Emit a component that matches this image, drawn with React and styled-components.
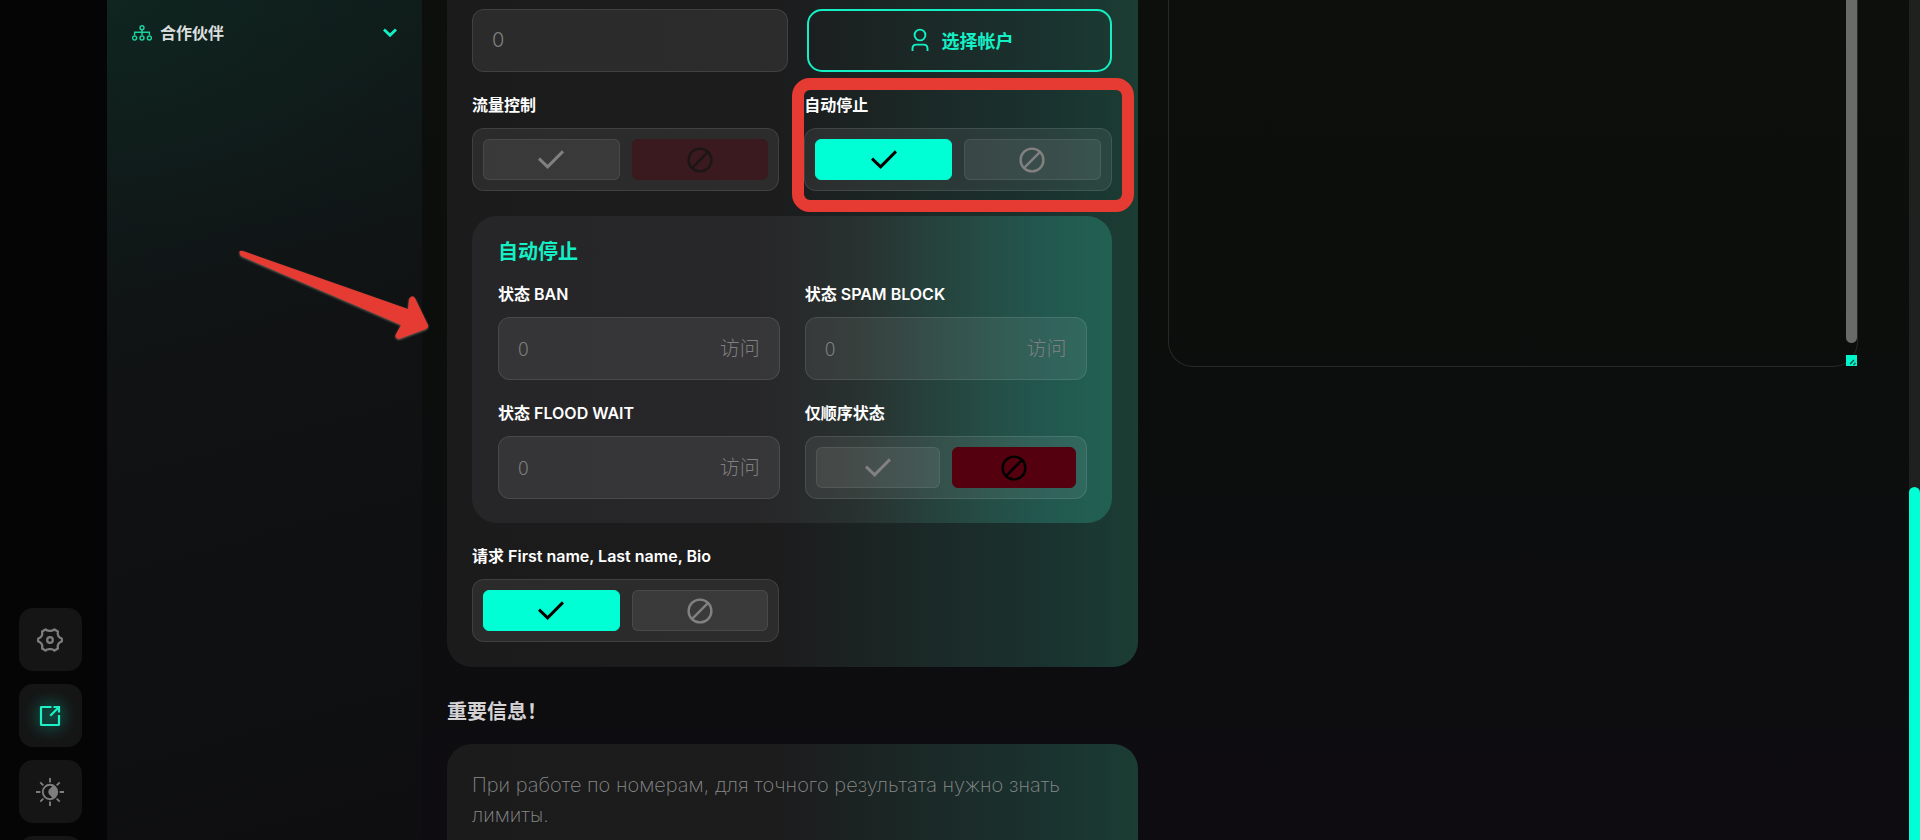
import { useState } from "react";
import styled, { createGlobalStyle, css } from "styled-components";

const GlobalStyle = createGlobalStyle`
    * {
        box-sizing: border-box;
    }

    body {
        margin: 0;
        background-color: #0d0e0e;
        color: #ffffff;
        font-family: Inter, "Noto Sans CJK SC", sans-serif;
    }

    button, input, textarea {
        font-family: inherit;
        margin: 0;
    }
`;

const Page = styled.div`
    position: relative;
    display: flex;
    height: 100vh;
    overflow: hidden;
    background: linear-gradient(180deg, #0d0f0c 0%, #0c0e0d 50%, #0d0d0f 70%, #0e0c10 100%);
`;

const Rail = styled.nav`
    display: flex;
    flex-direction: column;
    justify-content: flex-end;
    flex: 0 0 107px;
    padding-left: 19px;
    background-color: #050505;
    overflow: hidden;
`;

const RailList = styled.div`
    display: flex;
    flex-direction: column;
    gap: 13px;
    margin-bottom: -59px;
`;

const RailButton = styled.button`
    display: flex;
    justify-content: center;
    align-items: center;
    width: 63px;
    height: 63px;
    padding: 0 2px 0 0;
    border: none;
    border-radius: 14px;
    background-color: #151515;
    color: ${({ $active }) => ($active ? "#1df2c6" : "#7d7d7d")};
    cursor: pointer;

    svg {
        overflow: visible;
        filter: ${({ $active }) => ($active ? "drop-shadow(0 0 8px #00ffd4)" : "none")};
    }
`;

const Sidebar = styled.aside`
    flex: 0 0 315px;
    padding: 20px 25px;
    background:
        radial-gradient(ellipse 420px 280px at 0 0, rgba(16, 52, 40, 0.35), transparent),
        linear-gradient(165deg, #0f1d1b 0%, #101616 26%, #101213 44%, #0e0e10 100%);
`;

const MenuItem = styled.button`
    display: flex;
    align-items: center;
    width: 100%;
    height: 26px;
    padding: 0;
    border: none;
    background: none;
    color: #dadedd;
    font-size: 16px;
    line-height: 24px;
    font-weight: 600;
    cursor: pointer;

    span {
        flex: 1;
        margin-left: 8px;
        text-align: left;
    }
`;

const Main = styled.main`
    display: grid;
    grid-template-columns: 1fr 1fr;
    align-items: start;
    gap: 30px;
    flex: 1;
    min-width: 0;
    padding: 0 51px 0 25px;
`;

const Column = styled.div`
    min-width: 0;
`;

const cardGradient = css`
    background: linear-gradient(90deg, #1b1b1c 0%, #1c1c1d 48%, #1b2725 66%, #1a3330 88%, #1b3d33 100%);
`;

const FormCard = styled.section`
    ${cardGradient}
    padding: 9px 26px 25px 25px;
    border-radius: 0 0 25px 25px;
`;

const AccountRow = styled.div`
    display: flex;
    gap: 19px;
`;

const FieldGrid = styled.div`
    display: grid;
    grid-template-columns: 1fr 1fr;
    gap: 20px 25px;
`;

const MainFields = styled(FieldGrid)`
    margin-top: 20px;
`;

const Field = styled.div`
    display: flex;
    flex-direction: column;
    gap: 10px;
    min-width: 0;
`;

const fieldLabel = css`
    font-size: 16px;
    line-height: 26px;
    font-weight: 600;
`;

const Label = styled.label`
    ${fieldLabel}
`;

const GroupLabel = styled.span`
    ${fieldLabel}
`;

const fieldBox = css`
    height: 63px;
    border: 1px solid rgba(255, 255, 255, 0.1);
    border-radius: 12px;
    background-color: rgba(255, 255, 255, 0.07);
`;

const InputBox = styled.div`
    ${fieldBox}
    display: flex;
    align-items: center;
    flex: ${({ $grow }) => ($grow ? "1 1 0" : "none")};
    min-width: 0;
    padding: 0 19px 2px;
    color: #7f7f7f;
    font-size: 20px;
    font-weight: 300;
`;

const NumberInput = styled.input`
    flex: 1;
    min-width: 0;
    padding: 0;
    border: none;
    outline: none;
    background: none;
    color: inherit;
    font-size: inherit;
    font-weight: inherit;
    font-family: ${({ $cjk }) => ($cjk ? '"Noto Sans CJK SC", sans-serif' : "inherit")};

    &::placeholder {
        color: #7f7f7f;
        opacity: 1;
    }
`;

const SelectButton = styled.button`
    display: flex;
    justify-content: center;
    align-items: center;
    gap: 13px;
    flex: 0 0 305px;
    height: 63px;
    padding: 0 0 2px 6px;
    border: 2px solid #14f0c5;
    border-radius: 15px;
    background: none;
    color: #14f0c5;
    font-size: 18px;
    font-weight: 700;
    cursor: pointer;
`;

const ToggleBox = styled.div`
    ${fieldBox}
    display: flex;
    gap: 12px;
    padding: 10px;
`;

const ToggleButton = styled.button`
    display: flex;
    justify-content: center;
    align-items: center;
    flex: 1;
    padding: 0;
    border: 1px solid rgba(255, 255, 255, 0.08);
    border-radius: 6px;
    background-color: rgba(255, 255, 255, 0.07);
    color: #828081;
    cursor: pointer;

    ${({ $tone }) => $tone === "yes" && css`
        border-color: #00ffd4;
        background-color: #00ffd4;
        color: #000000;
    `}

    ${({ $tone }) => $tone === "no" && css`
        border-color: #54000f;
        background-color: #54000f;
        color: #000000;
    `}

    ${({ $tone }) => $tone === "muted" && css`
        border-color: #3a191f;
        background-color: #3a191f;
        color: #1d1617;
    `}
`;

const StopPanel = styled.section`
    grid-column: 1 / -1;
    margin-top: 5px;
    padding: 17px 25px 24px 26px;
    border-radius: 25px;
    background: linear-gradient(90deg, #262527 0%, #272628 44%, #28312f 60%, #254a43 78%, #22584f 90%, #216152 100%);
`;

const PanelTitle = styled.h2`
    margin: 0 0 10px;
    color: #14f0c5;
    font-size: 20px;
    line-height: 38px;
    font-weight: 700;
`;

const InfoTitle = styled.h2`
    margin: 31px 0 17px;
    color: #d4d2d5;
    font-size: 20px;
    line-height: 29px;
    font-weight: 700;
`;

const InfoCard = styled.section`
    ${cardGradient}
    padding: 26px 25px;
    border-radius: 25px;
    color: #888a8a;
    font-size: 20px;
    line-height: 30px;
    font-weight: 200;

    p {
        margin: 0 0 30px;
    }
`;

const LogBox = styled.div`
    position: relative;
    height: 367px;
    border: 1px solid #272a28;
    border-top: none;
    border-radius: 0 0 25px 25px;
`;

const LogArea = styled.textarea`
    display: block;
    width: 100%;
    height: 100%;
    padding: 20px;
    border: none;
    outline: none;
    resize: none;
    overflow: hidden;
    background: none;
    color: #ffffff;
    font-size: 16px;
`;

const LogThumb = styled.div`
    position: absolute;
    top: 0;
    right: 0;
    width: 11px;
    height: 343px;
    border-radius: 0 0 6px 6px;
    background-color: #6a6b69;
`;

const LogResizer = styled.div`
    position: absolute;
    right: 0;
    bottom: 0;
    width: 11px;
    height: 11px;
    background-color: #00f5cb;

    svg {
        display: block;
    }
`;

const PageTrack = styled.div`
    display: flex;
    flex-direction: column;
    justify-content: flex-end;
    flex: 0 0 11px;
    background-color: #1f2020;
`;

const PageThumb = styled.div`
    height: 42%;
    border-radius: 6px 6px 0 0;
    background-color: #00ffd4;
`;

const MarkedField = styled(Field)`
    position: relative;

    &::after {
        content: "";
        position: absolute;
        inset: -14px -22px -21px -12px;
        border: 12px solid #e63b32;
        border-radius: 18px;
        pointer-events: none;
    }
`;

const Arrow = styled.svg`
    position: absolute;
    left: 236px;
    top: 246px;
    pointer-events: none;
    filter: drop-shadow(0 1px 1px rgba(150, 130, 120, 0.7));
`;

function PartnersIcon() {
    return (
        <svg width="20" height="16" viewBox="0 0 20 16" fill="none" stroke="#1bd3a2" strokeWidth="1.4">
            <circle cx="10" cy="2.7" r="2" />
            <path d="M10 4.7v5.6M2.6 10V7.3h14.8V10" />
            <circle cx="2.6" cy="13" r="2" />
            <circle cx="10" cy="13" r="2" />
            <circle cx="17.4" cy="13" r="2" />
        </svg>
    );
}

function ChevronIcon() {
    return (
        <svg width="14" height="10" viewBox="0 0 14 10" fill="none" stroke="#12f0c4" strokeWidth="2.8">
            <path d="M1 1.4l6 5.8L13 1.4" />
        </svg>
    );
}

function GearIcon() {
    return (
        <svg width="26" height="24" viewBox="0 0 26 24" fill="none" stroke="currentColor" strokeWidth="2.3" strokeLinejoin="round">
            <path d="M8.5 1.4 Q10.2 3.1 13 2.8 Q15.8 3.1 17.5 1.4 L20.9 3.5 Q20.2 6.1 21.4 8.1 Q22.5 9.9 24.8 10.5 V13.5 Q22.5 14.1 21.4 15.9 Q20.2 17.9 20.9 20.5 L17.5 22.6 Q15.8 20.9 13 21.2 Q10.2 20.9 8.5 22.6 L5.1 20.5 Q5.8 17.9 4.6 15.9 Q3.5 14.1 1.2 13.5 V10.5 Q3.5 9.9 4.6 8.1 Q5.8 6.1 5.1 3.5 Z" />
            <circle cx="13" cy="12" r="2.8" />
        </svg>
    );
}

function ShareIcon() {
    return (
        <svg width="22" height="22" viewBox="0 0 22 22" fill="none" stroke="currentColor" strokeWidth="2.2">
            <path d="M12.5 2H2.6Q2 2 2 2.6V19.4Q2 20 2.6 20H19.4Q20 20 20 19.4V10" />
            <path d="M11.3 10.7L20 2M14.5 2H20V7.5" />
        </svg>
    );
}

function ThemeIcon() {
    return (
        <svg width="28" height="28" viewBox="0 0 28 28" fill="none" stroke="currentColor" strokeWidth="1.9">
            <circle cx="14" cy="14" r="7.2" />
            <path d="M17 7.5A7.2 7.2 0 0 1 17 20.5A7 7 0 0 1 14.8 18A4.4 4.4 0 0 1 14.8 10A7 7 0 0 1 17 7.5Z" fill="currentColor" stroke="none" />
            <path d="M14 0v4.4M14 23.6V28M0 14h4.4M23.6 14H28M4.3 4.3l3 3M20.7 20.7l3 3M23.7 4.3l-3 3M7.3 20.7l-3 3" />
        </svg>
    );
}

function UserIcon() {
    return (
        <svg width="18" height="24" viewBox="0 0 18 24" fill="none" stroke="currentColor" strokeWidth="1.9">
            <circle cx="9" cy="7" r="5.4" />
            <path d="M1.5 23V20.5Q1.5 16.6 5.4 16.6H12.6Q16.5 16.6 16.5 20.5V23" />
        </svg>
    );
}

function CheckIcon() {
    return (
        <svg width="26" height="20" viewBox="0 0 26 20" fill="none" stroke="currentColor" strokeWidth="3">
            <path d="M1 8.6l8.6 8.2L25 1.4" />
        </svg>
    );
}

function BanIcon() {
    return (
        <svg width="26" height="26" viewBox="0 0 26 26" fill="none" stroke="currentColor" strokeWidth="2.4">
            <circle cx="13" cy="13" r="11.4" />
            <path d="M4.9 21.1L21.1 4.9" />
        </svg>
    );
}

function Toggle({ labelId, defaultOn, muted }) {
    const [on, setOn] = useState(defaultOn);
    const offTone = muted ? "muted" : "no";

    return (
        <ToggleBox role="group" aria-labelledby={labelId}>
            <ToggleButton type="button" aria-label="开" aria-pressed={on} $tone={on ? "yes" : undefined} onClick={() => setOn(true)}>
                <CheckIcon />
            </ToggleButton>
            <ToggleButton type="button" aria-label="关" aria-pressed={!on} $tone={on ? undefined : offTone} onClick={() => setOn(false)}>
                <BanIcon />
            </ToggleButton>
        </ToggleBox>
    );
}

function ToggleField({ id, label, defaultOn = false, muted = false, as: Wrapper = Field }) {
    return (
        <Wrapper>
            <GroupLabel id={id}>{label}</GroupLabel>
            <Toggle labelId={id} defaultOn={defaultOn} muted={muted} />
        </Wrapper>
    );
}

function LimitField({ id, label }) {
    return (
        <Field>
            <Label htmlFor={id}>{label}</Label>
            <InputBox>
                <NumberInput id={id} type="text" inputMode="numeric" placeholder="0" $cjk />
                <span>访问</span>
            </InputBox>
        </Field>
    );
}

export default function App() {
    return (
        <>
            <GlobalStyle />
            <Page>
                <Rail>
                    <RailList>
                        <RailButton type="button" aria-label="设置"><GearIcon /></RailButton>
                        <RailButton type="button" aria-label="打开" $active><ShareIcon /></RailButton>
                        <RailButton type="button" aria-label="主题"><ThemeIcon /></RailButton>
                        <RailButton type="button" aria-label="更多" />
                    </RailList>
                </Rail>
                <Sidebar>
                    <MenuItem type="button">
                        <PartnersIcon />
                        <span>合作伙伴</span>
                        <ChevronIcon />
                    </MenuItem>
                </Sidebar>
                <Main>
                    <Column>
                        <FormCard>
                            <AccountRow>
                                <InputBox $grow>
                                    <NumberInput type="text" inputMode="numeric" placeholder="0" aria-label="数量" />
                                </InputBox>
                                <SelectButton type="button">
                                    <UserIcon />
                                    选择帐户
                                </SelectButton>
                            </AccountRow>
                            <MainFields>
                                <ToggleField id="flow" label="流量控制" muted />
                                <ToggleField id="autostop" label="自动停止" defaultOn as={MarkedField} />
                                <StopPanel>
                                    <PanelTitle>自动停止</PanelTitle>
                                    <FieldGrid>
                                        <LimitField id="ban" label="状态 BAN" />
                                        <LimitField id="spam" label="状态 SPAM BLOCK" />
                                        <LimitField id="flood" label="状态 FLOOD WAIT" />
                                        <ToggleField id="sequence" label="仅顺序状态" />
                                    </FieldGrid>
                                </StopPanel>
                                <ToggleField id="request" label="请求 First name, Last name, Bio" defaultOn />
                            </MainFields>
                        </FormCard>
                        <InfoTitle>重要信息！</InfoTitle>
                        <InfoCard>
                            <p>При работе по номерам, для точного результата нужно знать лимиты.</p>
                        </InfoCard>
                    </Column>
                    <LogBox>
                        <LogArea aria-label="日志" />
                        <LogThumb />
                        <LogResizer>
                            <svg width="11" height="11" viewBox="0 0 11 11" stroke="#0a5145" strokeWidth="1.3">
                                <path d="M4 9l4-4M7.5 10l2-2" />
                            </svg>
                        </LogResizer>
                    </LogBox>
                </Main>
                <PageTrack>
                    <PageThumb />
                </PageTrack>
                <Arrow width="200" height="100" viewBox="236 246 200 100">
                    <path
                        d="M243 251L408 309L409 299Q412 294 415 298L428 325Q429 327 426 329L399 339Q394 338 396 334L401 325L241 256Q237 250 243 251Z"
                        fill="#e63b32"
                    />
                </Arrow>
            </Page>
        </>
    );
}
